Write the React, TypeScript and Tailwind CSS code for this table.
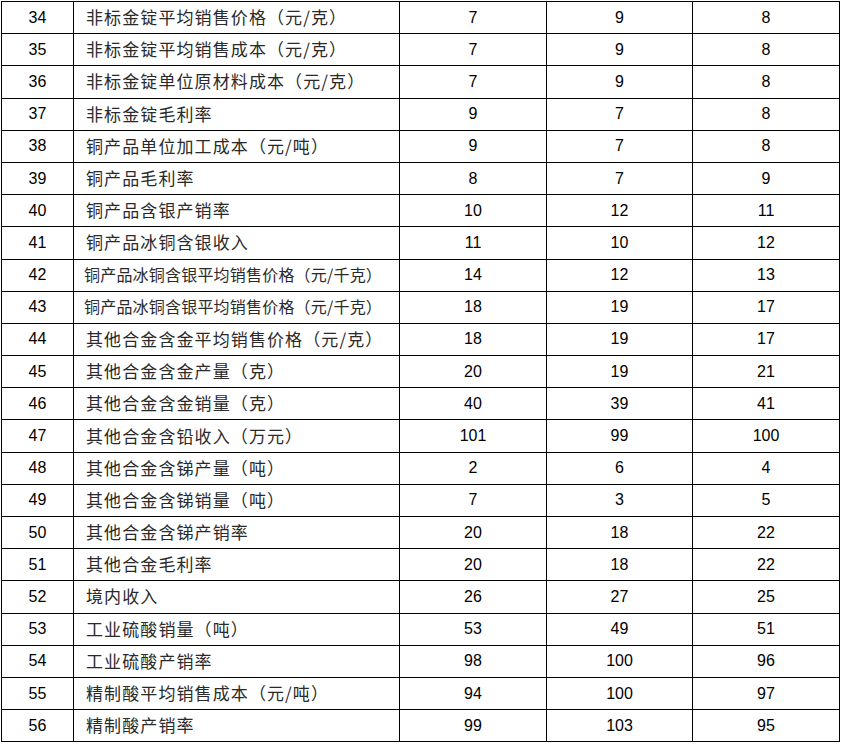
const rows: [number, string, number, number, number][] = [
  [34, "非标金锭平均销售价格（元/克）", 7, 9, 8],
  [35, "非标金锭平均销售成本（元/克）", 7, 9, 8],
  [36, "非标金锭单位原材料成本（元/克）", 7, 9, 8],
  [37, "非标金锭毛利率", 9, 7, 8],
  [38, "铜产品单位加工成本（元/吨）", 9, 7, 8],
  [39, "铜产品毛利率", 8, 7, 9],
  [40, "铜产品含银产销率", 10, 12, 11],
  [41, "铜产品冰铜含银收入", 11, 10, 12],
  [42, "铜产品冰铜含银平均销售价格（元/千克）", 14, 12, 13],
  [43, "铜产品冰铜含银平均销售价格（元/千克）", 18, 19, 17],
  [44, "其他合金含金平均销售价格（元/克）", 18, 19, 17],
  [45, "其他合金含金产量（克）", 20, 19, 21],
  [46, "其他合金含金销量（克）", 40, 39, 41],
  [47, "其他合金含铅收入（万元）", 101, 99, 100],
  [48, "其他合金含锑产量（吨）", 2, 6, 4],
  [49, "其他合金含锑销量（吨）", 7, 3, 5],
  [50, "其他合金含锑产销率", 20, 18, 22],
  [51, "其他合金毛利率", 20, 18, 22],
  [52, "境内收入", 26, 27, 25],
  [53, "工业硫酸销量（吨）", 53, 49, 51],
  [54, "工业硫酸产销率", 98, 100, 96],
  [55, "精制酸平均销售成本（元/吨）", 94, 100, 97],
  [56, "精制酸产销率", 99, 103, 95],
];

export default function App() {
  return (
    <div className="w-[841px] h-[744px] bg-white overflow-hidden pt-px pl-px">
      <table className="w-[839px] table-fixed border-collapse text-[16px] text-black font-['Liberation_Sans',sans-serif]">
        <colgroup>
          <col className="w-[72px]" />
          <col className="w-[326px]" />
          <col className="w-[147px]" />
          <col className="w-[146px]" />
          <col className="w-[147px]" />
        </colgroup>
        <tbody>
          {rows.map(([n, label, a, b, c]) => {
            const long = label.length > 17;
            return (
              <tr key={n} className="h-[32.2px]">
                <td className="border border-black text-center p-0 leading-none">{n}</td>
                <td className="border border-black p-0 leading-none whitespace-nowrap">
                  <span
                    className={
                      long
                        ? "ml-[10px] font-['Noto_Sans_CJK_SC',sans-serif] text-[16px] tracking-[0.2px] text-[#2a2a2a]"
                        : "ml-[12px] font-['Noto_Sans_CJK_SC',sans-serif] text-[17px] tracking-[1.1px] text-[#2a2a2a]"
                    }
                  >
                    {label}
                  </span>
                </td>
                <td className="border border-black text-center p-0 leading-none">{a}</td>
                <td className="border border-black text-center p-0 leading-none">{b}</td>
                <td className="border border-black text-center p-0 leading-none">{c}</td>
              </tr>
            );
          })}
        </tbody>
      </table>
    </div>
  );
}
